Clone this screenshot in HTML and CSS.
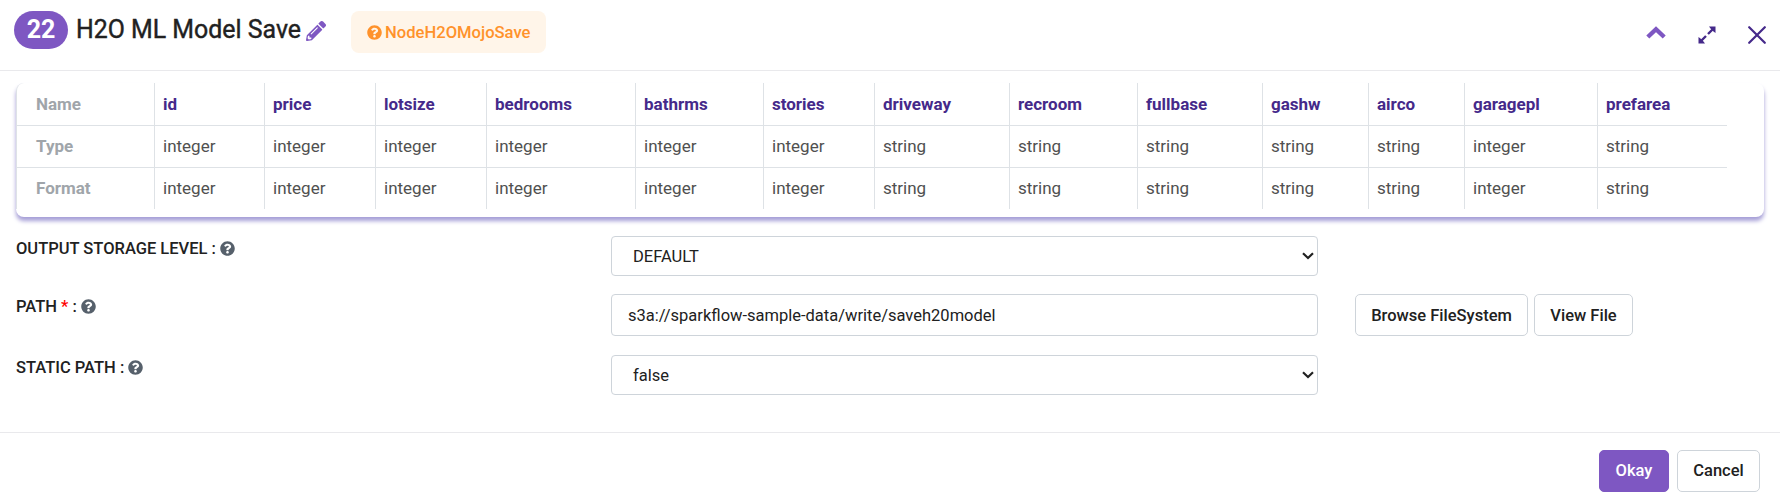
FILE: index.html
```html
<!DOCTYPE html>
<html lang="en">
<head>
<meta charset="utf-8">
<title>H2O ML Model Save</title>
<link rel="stylesheet" href="styles.css">
</head>
<body>
<svg class="defs" width="0" height="0" aria-hidden="true">
  <symbol id="help" viewBox="0 0 512 512"><path fill="currentColor" d="M504 256c0 137-111 248-248 248S8 393 8 256 119 8 256 8s248 111 248 248zM262.700 90c-54.500 0-89.300 23-116.500 63.800-3.500 5.300-2.400 12.400 2.700 16.300l34.700 26.300c5.200 3.900 12.600 3 16.700-2.100 17.900-22.700 30.100-35.800 57.300-35.800 20.400 0 45.700 13.100 45.700 33 0 15-12.400 22.700-32.500 34C247.100 238.500 216 255 216 296v4c0 6.600 5.400 12 12 12h56c6.600 0 12-5.400 12-12v-1.300c0-28.800 84.200-30 84.200-108 0-58.700-60.900-100.700-117.500-100.700zM256 338c-25.400 0-46 20.600-46 46s20.600 46 46 46 46-20.600 46-46-20.600-46-46-46z"/></symbol>
</svg>
<div class="dialog">
  <header class="header">
    <span class="badge">22</span>
    <h1 class="title">H2O ML Model Save</h1>
    <svg class="pencil" viewBox="0 0 512 512"><path fill="currentColor" d="M498 142l-46 46c-5 5-12 5-17 0L324 77c-5-5-5-12 0-17l46-46c19-19 49-19 68 0l60 60c19 19 19 49 0 68zM284 100L22 362 0 484c-3 16 12 31 28 28l122-22 262-262c5-5 5-12 0-17L301 100c-5-5-12-5-17 0zM124 340c-5-6-5-14 0-20l154-154c6-5 14-5 20 0s5 14 0 20L144 340c-6 5-14 5-20 0zm-36 84h48v36l-65 12-31-31 12-65h36z"/></svg>
    <span class="chip"><svg class="chip-icon"><use href="#help"/></svg>NodeH2OMojoSave</span>
    <div class="tools">
      <svg class="tool-up" viewBox="0 0 20 13"><path d="M1.800 11L10 3.200l8.200 7.800" fill="none" stroke="currentColor" stroke-width="4.400"/></svg>
      <svg class="tool-expand" viewBox="0 0 18 18"><path d="M10 8l5-5M8 10l-5 5" fill="none" stroke="currentColor" stroke-width="2.400"/><path d="M11 .500h6.500V7l-2-1.500-3-3zM7 17.500H.500V11l2 1.500 3 3z" fill="currentColor"/></svg>
      <svg class="tool-close" viewBox="0 0 18 18"><path d="M1.200 1.200l15.600 15.600M16.800 1.200L1.200 16.800" fill="none" stroke="currentColor" stroke-width="2.200" stroke-linecap="round"/></svg>
    </div>
  </header>

  <main class="body">
    <div class="schema">
      <table class="schema-table">
        <colgroup><col class="w-head"><col class="w-id"><col class="w-price"><col class="w-lotsize"><col class="w-bedrooms"><col class="w-bathrms"><col class="w-stories"><col class="w-driveway"><col class="w-recroom"><col class="w-fullbase"><col class="w-gashw"><col class="w-airco"><col class="w-garagepl"><col class="w-prefarea"></colgroup>
        <tr class="names"><th>Name</th><td>id</td><td>price</td><td>lotsize</td><td>bedrooms</td><td>bathrms</td><td>stories</td><td>driveway</td><td>recroom</td><td>fullbase</td><td>gashw</td><td>airco</td><td>garagepl</td><td>prefarea</td></tr>
        <tr><th>Type</th><td>integer</td><td>integer</td><td>integer</td><td>integer</td><td>integer</td><td>integer</td><td>string</td><td>string</td><td>string</td><td>string</td><td>string</td><td>integer</td><td>string</td></tr>
        <tr><th>Format</th><td>integer</td><td>integer</td><td>integer</td><td>integer</td><td>integer</td><td>integer</td><td>string</td><td>string</td><td>string</td><td>string</td><td>string</td><td>integer</td><td>string</td></tr>
      </table>
    </div>

    <div class="field">
      <div class="label">OUTPUT STORAGE LEVEL : <svg class="help"><use href="#help"/></svg></div>
      <div class="control select"><span>DEFAULT</span><svg class="caret" viewBox="0 0 12 8"><path d="M1 1.300l5 4.700 5-4.700" fill="none" stroke="currentColor" stroke-width="2.200"/></svg></div>
    </div>
    <div class="field">
      <div class="label">PATH <span class="req">*</span> : <svg class="help"><use href="#help"/></svg></div>
      <div class="control input">s3a://sparkflow-sample-data/write/saveh20model</div>
      <div class="actions"><button class="btn browse">Browse FileSystem</button><button class="btn view">View File</button></div>
    </div>
    <div class="field">
      <div class="label">STATIC PATH : <svg class="help"><use href="#help"/></svg></div>
      <div class="control select"><span>false</span><svg class="caret" viewBox="0 0 12 8"><path d="M1 1.300l5 4.700 5-4.700" fill="none" stroke="currentColor" stroke-width="2.200"/></svg></div>
    </div>
  </main>

  <footer class="footer">
    <button class="btn okay">Okay</button>
    <button class="btn cancel">Cancel</button>
  </footer>
</div>
</body>
</html>
```
FILE: styles.css
```css
* { box-sizing: border-box; }
body { margin: 0; background: #fff; color: #212121; font-family: Roboto, sans-serif; font-size: 16.5px; }
.defs { display: block; }
.dialog { width: 1780px; height: 501px; display: flex; flex-direction: column; overflow: hidden; }

.header { height: 71px; flex: none; display: flex; align-items: flex-start; padding: 11px 14px 0; border-bottom: 1px solid #e9e9ec; }
.badge { width: 54px; height: 38px; border-radius: 19px; background: #7e57c2; color: #fff; font-size: 25px; font-weight: 700; line-height: 38px; text-align: center; }
.title { margin: 0 0 0 8px; width: 230px; font-size: 24.900px; font-weight: 400; line-height: 37px; white-space: nowrap; -webkit-text-stroke: .4px #212121; }
.pencil { width: 20px; height: 20px; margin-top: 10px; color: #7e57c2; }
.chip { display: flex; align-items: center; width: 195px; height: 42px; margin-left: 25px; padding-left: 16px; border-radius: 8px; background: #fff5e9; color: #ff922b; font-size: 16.600px; font-weight: 500; white-space: nowrap; }
.chip-icon { width: 15px; height: 15px; margin-right: 3px; }
.tools { display: flex; margin-left: auto; color: #45298a; }
.tool-up { width: 20px; height: 13px; margin: 15px 32px 0 0; color: #7e57c2; }
.tool-expand { width: 18px; height: 18px; margin: 15px 32px 0 0; }
.tool-close { width: 18px; height: 18px; margin-top: 15px; }

.body { flex: 1; padding: 12px 16px 0; }
.schema { height: 134px; margin-bottom: 19px; border-radius: 8px; box-shadow: 0 4px 4px #a69fd7; background: #fff; }
.schema-table { width: 1711px; table-layout: fixed; border-collapse: separate; border-spacing: 0; }
.schema-table th, .schema-table td { height: 42px; padding: 0 0 1px 8px; text-align: left; border-left: 1px solid #dee2e6; border-bottom: 1px solid #dee2e6; color: #505050; font-size: 17px; font-weight: 400; white-space: nowrap; }
.schema-table th { padding-left: 19px; color: #a0a5aa; font-weight: 700; }
.schema-table .names > * { height: 43px; }
.schema-table .names th { border-top-left-radius: 8px; }
.schema-table .names td { color: #45298a; font-weight: 700; }
.schema-table tr:last-child > * { height: 41px; border-bottom: 0; }
.w-head { width: 138px; }
.w-id { width: 110px; }
.w-price, .w-lotsize { width: 111px; }
.w-bedrooms { width: 149px; }
.w-bathrms { width: 128px; }
.w-stories { width: 111px; }
.w-driveway { width: 135px; }
.w-recroom { width: 128px; }
.w-fullbase { width: 125px; }
.w-gashw { width: 106px; }
.w-airco { width: 96px; }
.w-garagepl { width: 133px; }
.w-prefarea { width: 130px; }

.field { display: flex; margin-bottom: 18px; }
.field + .field { margin-bottom: 19px; }
.label { width: 595px; line-height: 25px; font-size: 16.500px; font-weight: 500; white-space: nowrap; }
.req { color: #f00; }
.help { width: 15px; height: 15px; vertical-align: -2px; color: #56606b; }
.control { width: 707px; display: flex; align-items: center; border: 1px solid #ced4da; border-radius: 4px; }
.select { height: 40px; justify-content: space-between; padding: 0 3px 0 21px; }
.input { height: 42px; padding-left: 16px; }
.caret { width: 12px; height: 8px; }
.actions { display: flex; gap: 6px; margin-left: 37px; }
.btn { height: 42px; padding: 0; border: 1px solid #ced4da; border-radius: 5px; background: #fff; color: #212121; font: 500 16.5px Roboto, sans-serif; }
.browse { width: 173px; }
.view { width: 99px; }

.footer { height: 69px; flex: none; display: flex; justify-content: flex-end; gap: 8px; padding: 17px 20px 0; border-top: 1px solid #e9e9ec; }
.footer .btn { padding-bottom: 1px; }
.okay { width: 70px; border-color: #7e57c2; background: #7e57c2; color: #fff; }
.cancel { width: 83px; }
```
